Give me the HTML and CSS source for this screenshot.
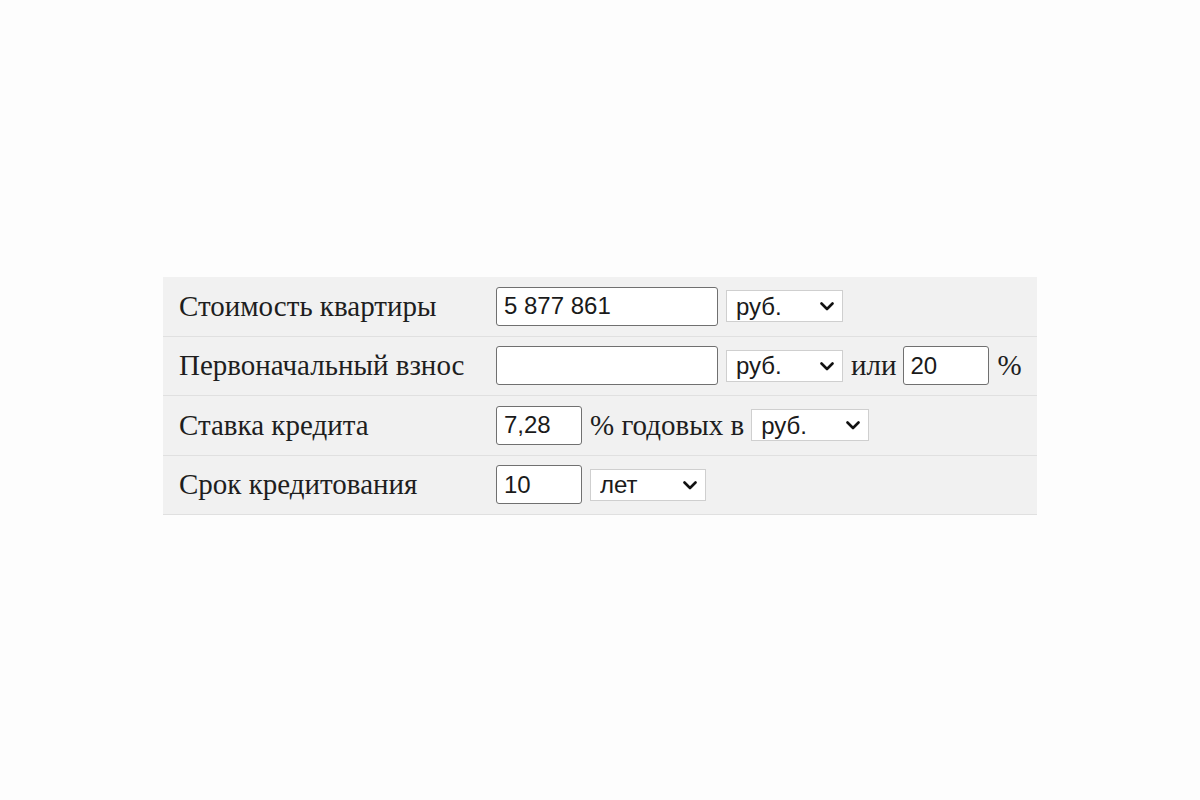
FILE: index.html
```html
<!DOCTYPE html>
<html lang="ru">
<head>
<meta charset="utf-8">
<title>Ипотечный калькулятор</title>
<link rel="stylesheet" href="styles.css">
</head>
<body>
<div class="page">
  <div class="calc">
    <div class="row">
      <div class="label">Стоимость квартиры</div>
      <div class="controls">
        <input class="inp wide" type="text" value="5 877 861">
        <span class="sel w117"><select><option>руб.</option></select><svg class="chev" viewBox="0 0 14 9" width="14" height="9"><path d="M1.5 1.5 L7 7 L12.5 1.5" fill="none" stroke="#111" stroke-width="2.6" stroke-linecap="round" stroke-linejoin="round"/></svg></span>
      </div>
    </div>
    <div class="row">
      <div class="label">Первоначальный взнос</div>
      <div class="controls">
        <input class="inp wide" type="text" value="">
        <span class="sel w117"><select><option>руб.</option></select><svg class="chev" viewBox="0 0 14 9" width="14" height="9"><path d="M1.5 1.5 L7 7 L12.5 1.5" fill="none" stroke="#111" stroke-width="2.6" stroke-linecap="round" stroke-linejoin="round"/></svg></span>
        <span class="txt">или</span>
        <input class="inp mid" type="text" value="20">
        <span class="txt pct">%</span>
      </div>
    </div>
    <div class="row">
      <div class="label">Ставка кредита</div>
      <div class="controls">
        <input class="inp short" type="text" value="7,28">
        <span class="txt">% годовых в</span>
        <span class="sel w118 tight"><select><option>руб.</option></select><svg class="chev" viewBox="0 0 14 9" width="14" height="9"><path d="M1.5 1.5 L7 7 L12.5 1.5" fill="none" stroke="#111" stroke-width="2.6" stroke-linecap="round" stroke-linejoin="round"/></svg></span>
      </div>
    </div>
    <div class="row">
      <div class="label">Срок кредитования</div>
      <div class="controls">
        <input class="inp short" type="text" value="10">
        <span class="sel w116"><select><option>лет</option></select><svg class="chev" viewBox="0 0 14 9" width="14" height="9"><path d="M1.5 1.5 L7 7 L12.5 1.5" fill="none" stroke="#111" stroke-width="2.6" stroke-linecap="round" stroke-linejoin="round"/></svg></span>
      </div>
    </div>
  </div>
</div>
</body>
</html>
```
FILE: styles.css
```css
html, body {
  margin: 0;
  padding: 0;
  background: #fdfdfd;
}
.page {
  width: 1200px;
  height: 800px;
  padding-top: 277px;
  padding-left: 163px;
  box-sizing: border-box;
}
.calc {
  width: 874px;
  background: #f1f1f1;
}
.row {
  display: flex;
  align-items: center;
  height: 59.5px;
  border-bottom: 1px solid #e0e0e0;
  box-sizing: border-box;
}
.label {
  width: 333px;
  padding-left: 16px;
  box-sizing: border-box;
  font-family: "Liberation Serif", "Times New Roman", serif;
  font-size: 29px;
  color: #1e1e1e;
}
.controls {
  display: flex;
  align-items: center;
  gap: 8px;
}
.txt {
  font-family: "Liberation Serif", "Times New Roman", serif;
  font-size: 29px;
  color: #1e1e1e;
}
.pct {
  margin-left: 1px;
}
.tight {
  margin-left: -1px;
}
.inp {
  height: 39px;
  box-sizing: border-box;
  border: 1px solid #707070;
  border-radius: 3px;
  background: #fff;
  padding: 0 7px;
  font-family: "Liberation Sans", Arial, sans-serif;
  font-size: 24px;
  color: #1a1a1a;
  outline: none;
}
.wide { width: 222px; }
.mid { width: 86px; margin-left: -2px; }
.short { width: 86px; }
.sel {
  position: relative;
  display: inline-block;
  height: 32px;
}
.sel select {
  appearance: none;
  -webkit-appearance: none;
  height: 32px;
  width: 100%;
  box-sizing: border-box;
  border: 1px solid #cfcfcf;
  border-radius: 0;
  background: #fff;
  padding: 0 0 0 9px;
  font-family: "Liberation Sans", Arial, sans-serif;
  font-size: 24px;
  color: #1a1a1a;
  outline: none;
}
.w117 { width: 117px; }
.w118 { width: 118px; }
.w116 { width: 116px; }
.chev {
  position: absolute;
  right: 9px;
  top: 12px;
}
```
